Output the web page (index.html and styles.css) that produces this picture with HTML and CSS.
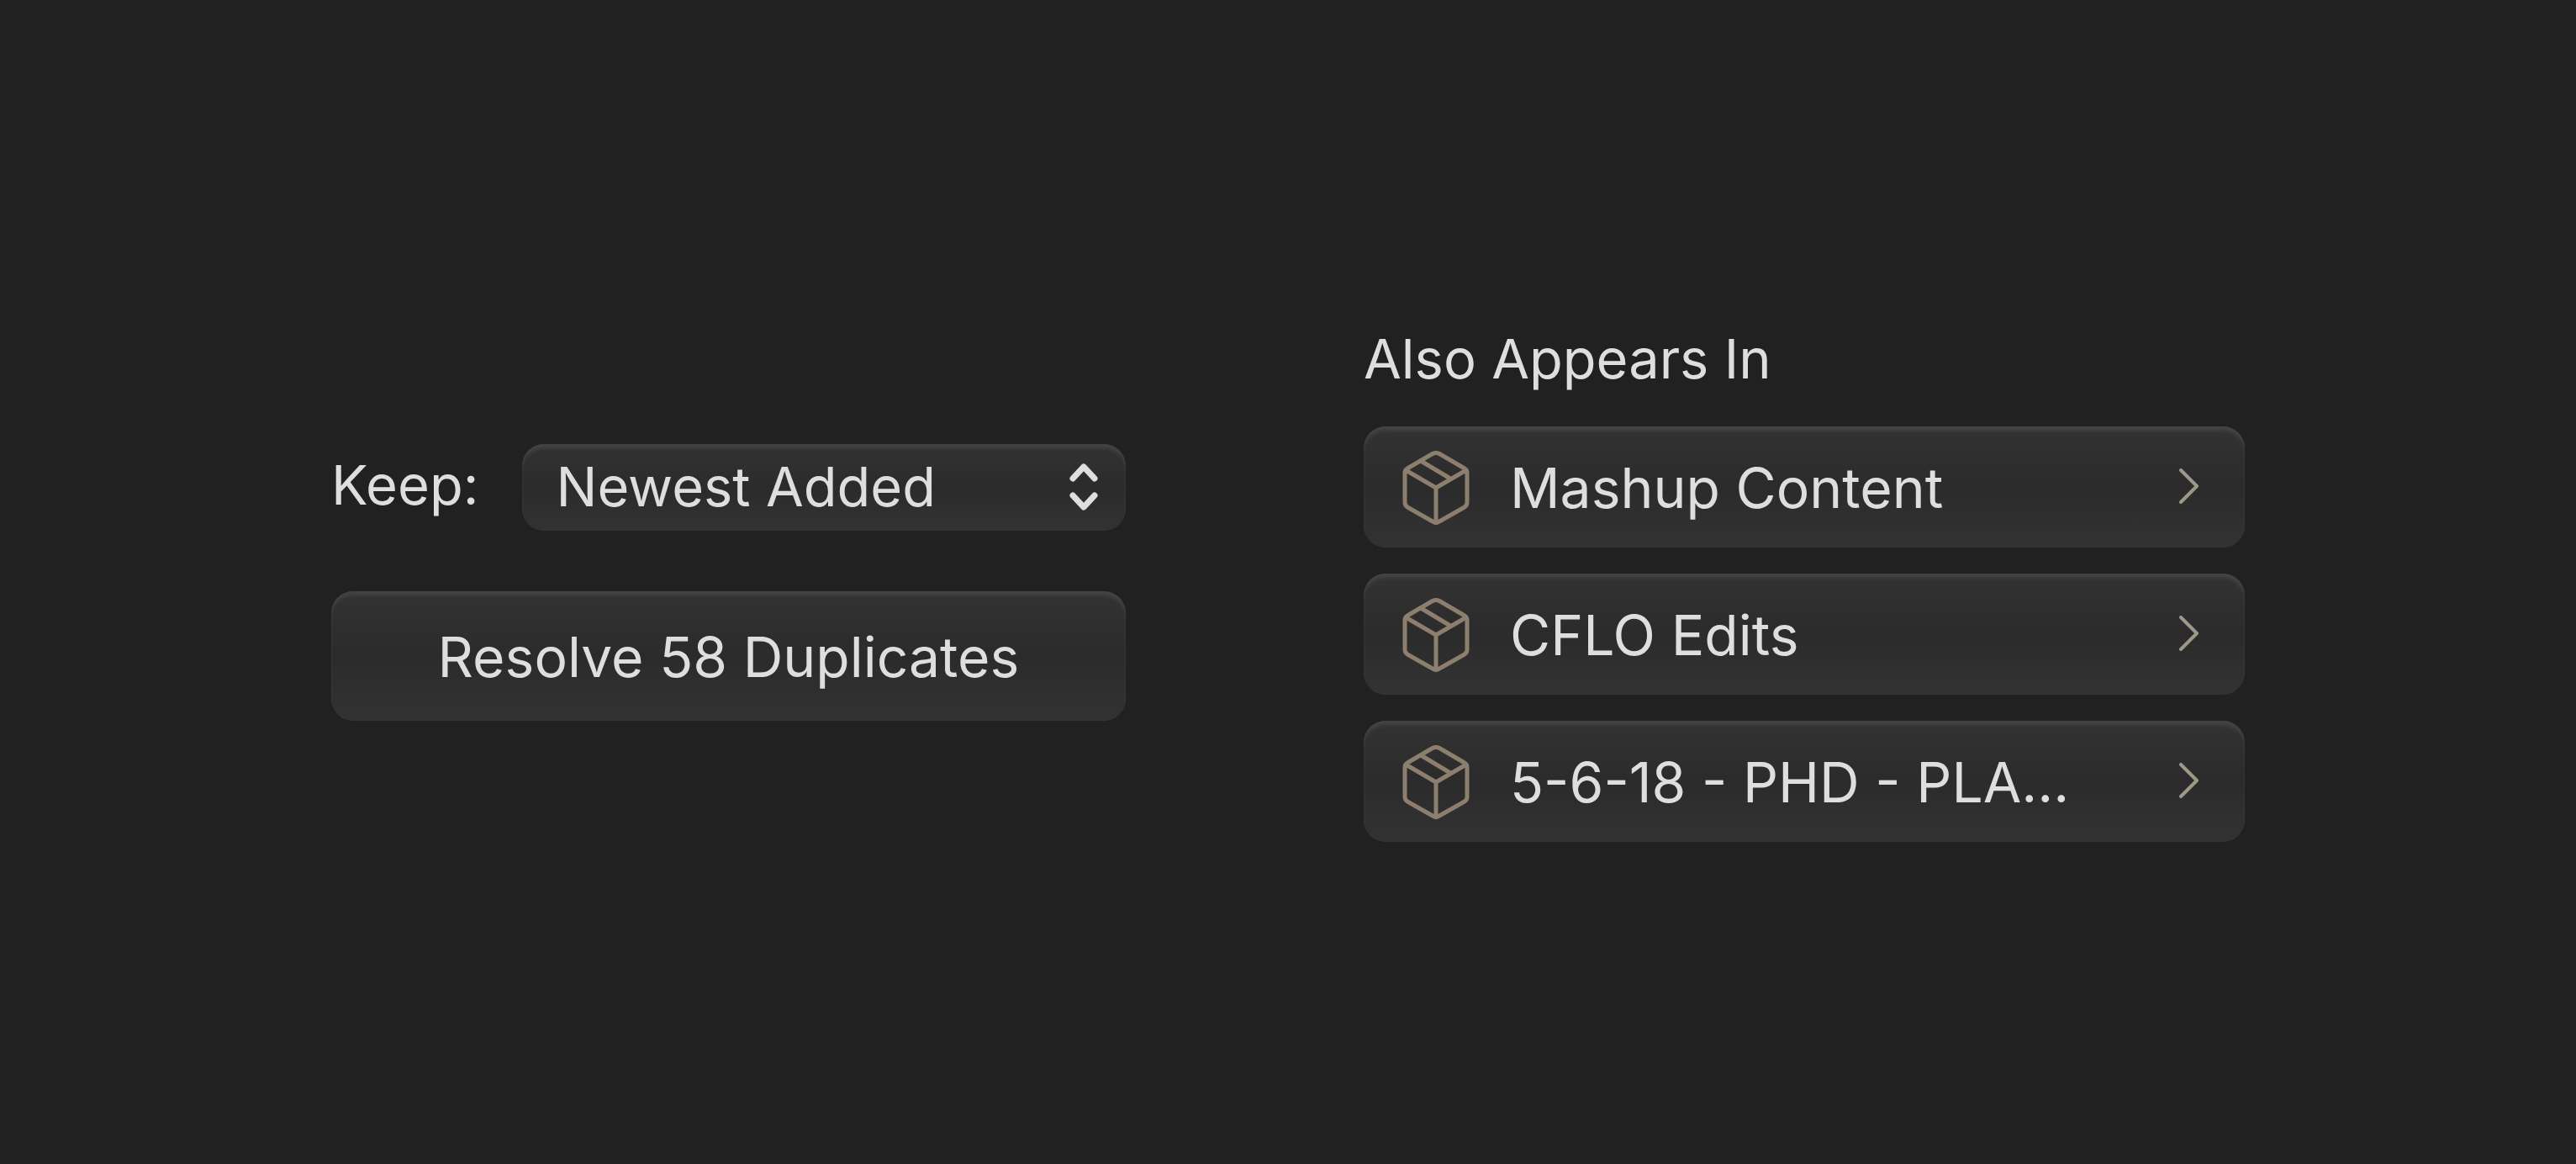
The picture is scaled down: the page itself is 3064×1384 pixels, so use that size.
FILE: index.html
```html
<!DOCTYPE html>
<html lang="en">
<head>
    <meta charset="utf-8">
    <title>Duplicates</title>
    <link rel="stylesheet" href="styles.css">
</head>
<body>
    <!-- shared icons -->
    <svg class="sprite" aria-hidden="true">
        <symbol id="box" viewBox="0 0 80 88">
            <path d="M35 4Q40 1 45 4L74 21Q77 23 77 26V61Q77 65 74 67L44 84Q40 87 36 84L6 67Q3 65 3 61V26Q3 23 6 21Z"/>
            <path d="M4 23L40 44L76 23M40 44V85M22 12L57 33"/>
        </symbol>
        <symbol id="chevron" viewBox="0 0 24 42">
            <path d="M2 2L21 21L2 40"/>
        </symbol>
    </svg>

    <main class="container">
        <form class="resolve">
            <div class="keep">
                <label for="keep">Keep:</label>
                <div class="select-wrap">
                    <select id="keep" class="panel">
                        <option>Newest Added</option>
                    </select>
                    <svg class="arrows" viewBox="0 0 34 56" aria-hidden="true">
                        <path d="M4 18L17 4L30 18M4 38L17 52L30 38"/>
                    </svg>
                </div>
            </div>
            <button type="button" class="panel">Resolve 58 Duplicates</button>
        </form>

        <section class="appears">
            <h2>Also Appears In</h2>
            <ul>
                <li><a href="#" class="panel">
                    <svg class="box"><use href="#box"/></svg>
                    <span>Mashup Content</span>
                    <svg class="chevron"><use href="#chevron"/></svg>
                </a></li>
                <li><a href="#" class="panel">
                    <svg class="box"><use href="#box"/></svg>
                    <span>CFLO Edits</span>
                    <svg class="chevron"><use href="#chevron"/></svg>
                </a></li>
                <li><a href="#" class="panel">
                    <svg class="box"><use href="#box"/></svg>
                    <span>5-6-18 - PHD - PLA…</span>
                    <svg class="chevron"><use href="#chevron"/></svg>
                </a></li>
            </ul>
        </section>
    </main>
</body>
</html>
```

FILE: styles.css
```css
* {
    box-sizing: border-box;
}

body {
    margin: 0;
    min-height: 100vh;
    display: flex;
    align-items: center;
    background: #212121;
    color: #dedede;
    font: 65px/88px Inter, "Liberation Sans", sans-serif;
}

.sprite {
    position: absolute;
    width: 0;
    height: 0;
}

svg {
    fill: none;
    stroke-linecap: round;
    stroke-linejoin: round;
    flex: none;
}

.container {
    flex: 1;
    display: grid;
    grid-template-columns: 945fr 1048fr;
    align-items: center;
    gap: 283px;
    padding: 0 394px;
}

.panel {
    display: block;
    width: 100%;
    border: none;
    border-radius: 26px;
    background: linear-gradient(#333, #2b2b2b 50%, #333);
    box-shadow: inset 0 6px 4px -1px #444442, inset 0 0 3px #353535;
    color: inherit;
    font: inherit;
}

.resolve {
    display: flex;
    flex-direction: column;
    gap: 72px;
}

.resolve button {
    height: 154px;
    padding: 2px 0 0;
    font-size: 66px;
    cursor: pointer;
}

.keep {
    display: flex;
    align-items: center;
    gap: 52px;
}

.keep label {
    padding-bottom: 4px;
}

.select-wrap {
    position: relative;
    flex: 1;
}

.select-wrap select {
    appearance: none;
    height: 103px;
    padding: 0 100px 0 40px;
}

.arrows {
    position: absolute;
    top: 23px;
    right: 33px;
    width: 34px;
    height: 56px;
    stroke: #dedede;
    stroke-width: 7;
    pointer-events: none;
}

.appears h2 {
    margin: 0 0 36px;
    font: inherit;
}

.appears ul {
    display: flex;
    flex-direction: column;
    gap: 31px;
    margin: 0;
    padding: 0;
    list-style: none;
}

.appears a {
    display: flex;
    align-items: center;
    gap: 48px;
    height: 144px;
    padding: 2px 54px 0 46px;
    font-size: 66px;
    text-decoration: none;
}

.appears span {
    flex: 1;
    overflow: hidden;
    text-overflow: ellipsis;
    white-space: nowrap;
}

.box {
    width: 80px;
    height: 88px;
    stroke: #8c7f6e;
    stroke-width: 5;
}

.chevron {
    width: 24px;
    height: 42px;
    margin-bottom: 4px;
    stroke: #a0978b;
    stroke-width: 4;
}
```
